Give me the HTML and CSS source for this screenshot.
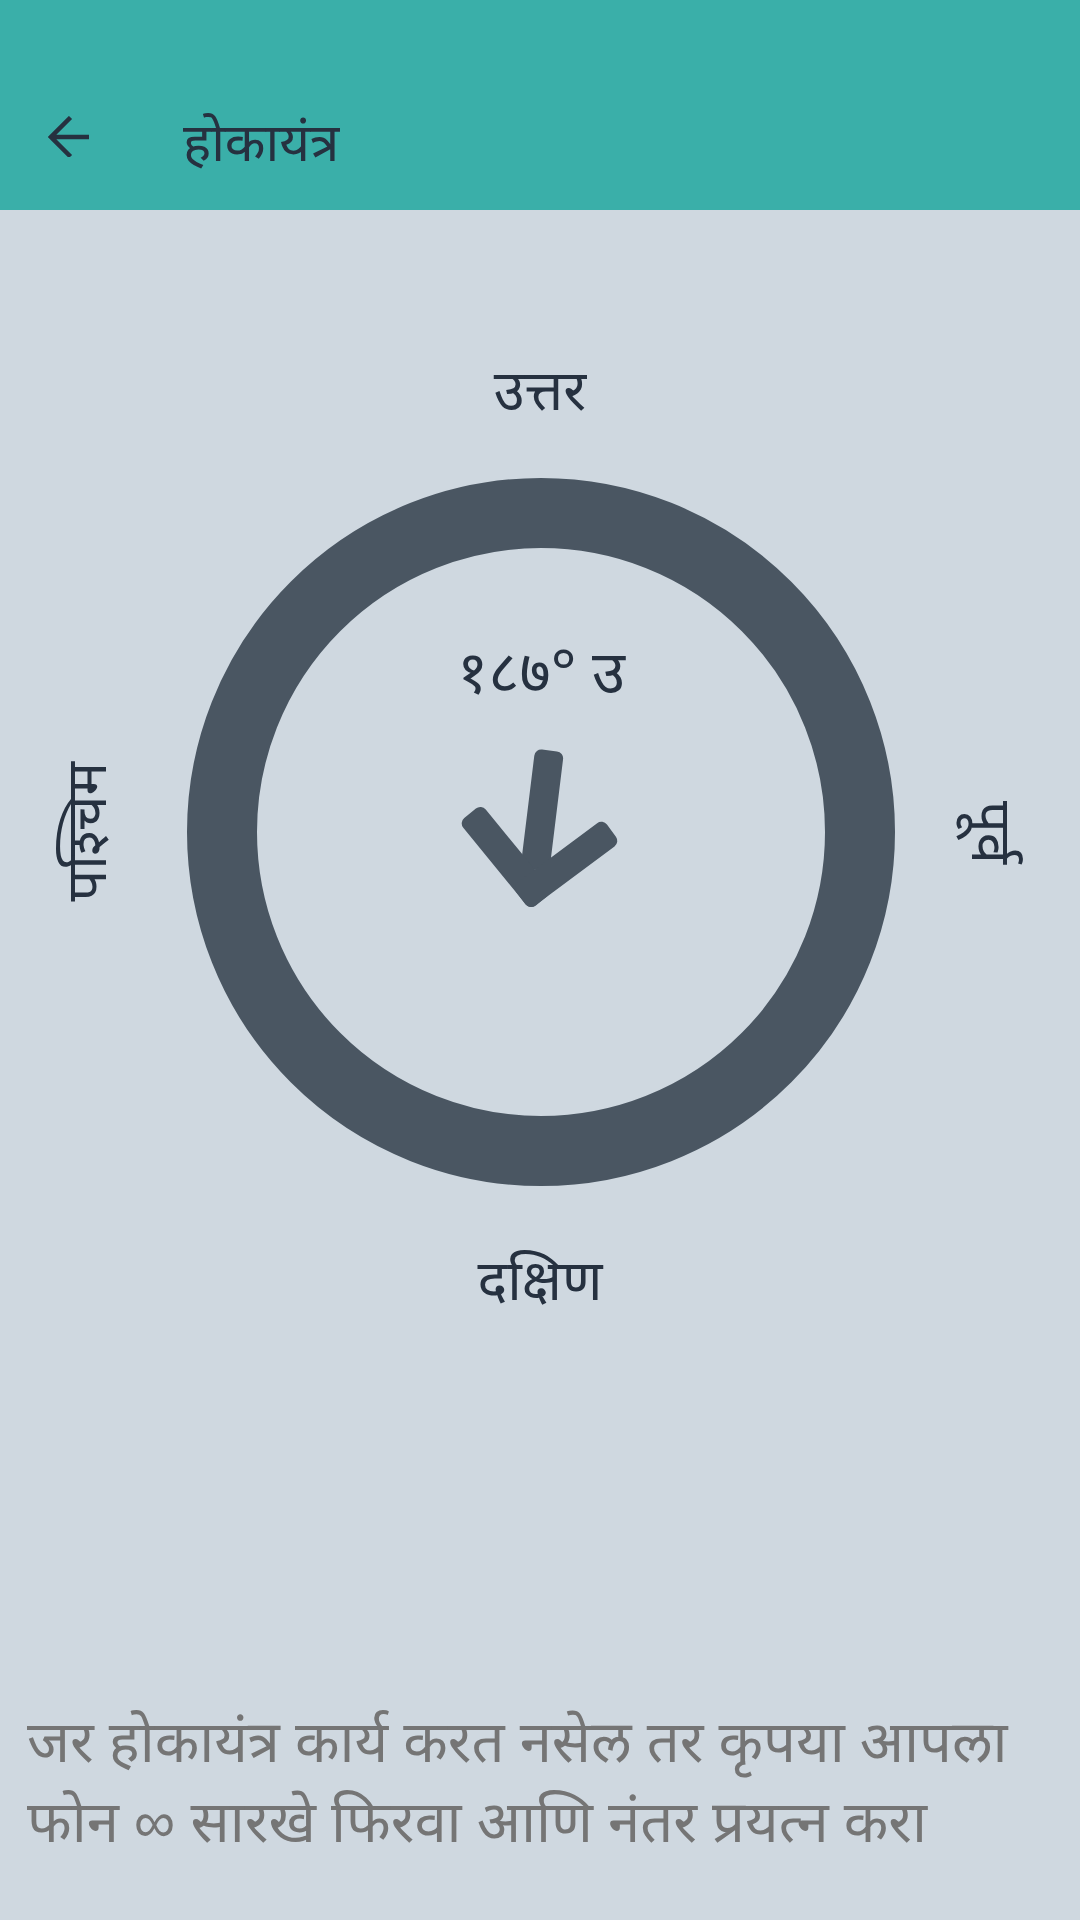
FILE: index.html
```html
<!DOCTYPE html>
<html lang="mr">
<head>
<meta charset="utf-8">
<title>होकायंत्र</title>
<link rel="stylesheet" href="styles.css">
</head>
<body>
<div class="app">
  <header class="toolbar">
    <svg class="back" viewBox="0 0 41 41" aria-hidden="true">
      <path d="M42 21H3 M22.5 1.5L3 21l19.5 19.5" fill="none" stroke="#263140" stroke-width="4.5" stroke-linejoin="miter"/>
    </svg>
    <h1 class="title">होकायंत्र</h1>
  </header>
  <main class="content">
    <section class="compass">
      <div class="dir dir-n">उत्तर</div>
      <div class="compass-row">
        <div class="side side-w"><span class="dir dir-w">पश्चिम</span></div>
        <div class="ring">
          <div class="heading">१८७° उ</div>
          <svg class="needle" viewBox="-100 -100 200 200" aria-hidden="true">
            <g transform="rotate(187)" fill="#4A5662">
              <rect x="-14.5" y="-50" width="29" height="120" rx="7"/>
              <rect x="-14.5" y="-14.5" width="29" height="113" rx="7" transform="translate(0 -70) rotate(-46.3)"/>
              <rect x="-14.5" y="-14.5" width="29" height="113" rx="7" transform="translate(0 -70) rotate(46.3)"/>
            </g>
          </svg>
        </div>
        <div class="side side-e"><span class="dir dir-e">पूर्व</span></div>
      </div>
      <div class="dir dir-s">दक्षिण</div>
    </section>
    <p class="hint">जर होकायंत्र कार्य करत नसेल तर कृपया आपला फोन ∞ सारखे फिरवा आणि नंतर प्रयत्न करा</p>
  </main>
</div>
</body>
</html>
```

FILE: styles.css
```css
* { box-sizing: border-box; margin: 0; padding: 0; }
html, body { width: 1080px; height: 1920px; }
body {
  background: #CFD8E0;
  font-family: "Noto Sans", "Noto Sans Devanagari", sans-serif;
  color: #263140;
}
.app { display: flex; flex-direction: column; height: 1920px; }
.toolbar {
  height: 210px;
  background: #3AAFA9;
  display: flex;
  align-items: center;
  padding-top: 63px;
  padding-left: 48px;
}
.back { width: 41px; height: 41px; display: block; }
.title { margin-left: 94px; margin-top: 8px; font-size: 53px; font-weight: 400; line-height: 1; }
.content { flex: 1; display: flex; flex-direction: column; }
.compass { display: flex; flex-direction: column; align-items: center; padding-top: 150px; }
.dir { font-size: 56px; line-height: 1; }
.dir-n { margin-bottom: 62px; }
.dir-s { margin-top: 64px; }
.compass-row {
  display: grid;
  grid-template-columns: 187px 708px 1fr;
  width: 1080px;
  align-items: center;
}
.side { display: flex; justify-content: center; }
.side-w { padding-right: 19px; }
.side-e { padding-left: 12px; }
.dir-w { writing-mode: vertical-rl; transform: rotate(180deg); }
.dir-e { writing-mode: vertical-rl; }
.ring {
  width: 708px;
  height: 708px;
  border: 70px solid #4A5662;
  border-radius: 50%;
  display: flex;
  flex-direction: column;
  align-items: center;
  padding-top: 92px;
}
.heading { font-size: 60px; line-height: 1; }
.needle { width: 200px; height: 200px; display: block; margin-top: 20px; }
.hint {
  margin-top: auto;
  padding: 0 27px 60px;
  font-size: 58px;
  line-height: 80px;
  color: #757575;
}
```
